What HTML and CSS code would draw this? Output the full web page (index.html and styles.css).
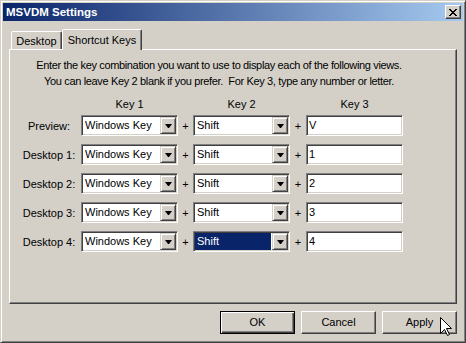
FILE: index.html
```html
<!DOCTYPE html>
<html lang="en">
<head>
    <meta charset="UTF-8">
    <title>MSVDM Settings</title>
    <link rel="stylesheet" href="styles.css">
</head>
<body>

<div class="window">
    <div class="titlebar">
        <span>MSVDM Settings</span>
        <button class="close" title="Close">
            <svg width="8" height="7" viewBox="0 0 8 7">
                <path d="M0 0h2v1h-2zM6 0h2v1h-2zM1 1h2v1h-2zM5 1h2v1h-2zM2 2h4v1h-4zM3 3h2v1h-2zM2 4h4v1h-4zM1 5h2v1h-2zM5 5h2v1h-2zM0 6h2v1h-2zM6 6h2v1h-2z" fill="#000"/>
            </svg>
        </button>
    </div>

    <div class="tabs">
        <div class="tab tab-desktop">Desktop</div>
        <div class="tab active">Shortcut Keys</div>
    </div>

    <div class="panel">
        <p class="intro">
            Enter the key combination you want to use to display each of the following views.<br>
            You can leave Key 2 blank if you prefer.&nbsp; For Key 3, type any number or letter.
        </p>

        <div class="keys">
            <div class="row head">
                <span></span><span class="col">Key 1</span><span></span><span class="col">Key 2</span><span></span><span class="col">Key 3</span>
            </div>

            <div class="row">
                <span class="label">Preview:</span>
                <div class="combo"><span class="value">Windows Key</span><span class="drop"></span></div>
                <span class="plus">+</span>
                <div class="combo"><span class="value">Shift</span><span class="drop"></span></div>
                <span class="plus">+</span>
                <div class="field">V</div>
            </div>

            <div class="row">
                <span class="label">Desktop 1:</span>
                <div class="combo"><span class="value">Windows Key</span><span class="drop"></span></div>
                <span class="plus">+</span>
                <div class="combo"><span class="value">Shift</span><span class="drop"></span></div>
                <span class="plus">+</span>
                <div class="field">1</div>
            </div>

            <div class="row">
                <span class="label">Desktop 2:</span>
                <div class="combo"><span class="value">Windows Key</span><span class="drop"></span></div>
                <span class="plus">+</span>
                <div class="combo"><span class="value">Shift</span><span class="drop"></span></div>
                <span class="plus">+</span>
                <div class="field">2</div>
            </div>

            <div class="row">
                <span class="label">Desktop 3:</span>
                <div class="combo"><span class="value">Windows Key</span><span class="drop"></span></div>
                <span class="plus">+</span>
                <div class="combo"><span class="value">Shift</span><span class="drop"></span></div>
                <span class="plus">+</span>
                <div class="field">3</div>
            </div>

            <div class="row">
                <span class="label">Desktop 4:</span>
                <div class="combo"><span class="value">Windows Key</span><span class="drop"></span></div>
                <span class="plus">+</span>
                <div class="combo"><span class="value selected">Shift</span><span class="drop"></span></div>
                <span class="plus">+</span>
                <div class="field">4</div>
            </div>
        </div>
    </div>

    <div class="actions">
        <button class="btn default">OK</button>
        <button class="btn">Cancel</button>
        <button class="btn">Apply</button>
    </div>

    <!-- mouse pointer over Apply -->
    <svg class="cursor" width="12" height="20" viewBox="0 0 12 20">
        <path d="M0.5 0.5V16.5L4.5 12.5L7.5 18.5L9.5 17.5L6.5 11.5H11.5Z" fill="#fff" stroke="#000" stroke-width="1"/>
    </svg>
</div>

</body>
</html>
```

FILE: styles.css
```css
body {
    margin: 0;
    font-family: "Liberation Sans", Arial, sans-serif;
    font-size: 11px;
    color: #000;
}
.window {
    position: relative;
    width: 466px;
    height: 343px;
    box-sizing: border-box;
    background: #d4d0c8;
    border: 1px solid;
    border-color: #d4d0c8 #404040 #404040 #d4d0c8;
    box-shadow: inset 1px 1px #fff, inset -1px -1px #808080;
    padding: 2px;
}
.titlebar {
    height: 18px;
    display: flex;
    align-items: center;
    justify-content: space-between;
    padding: 0 2px 0 3px;
    background: linear-gradient(to right, #0a246a, #a6caf0);
    color: #fff;
    font-weight: bold;
    font-size: 11.5px;
}
.close {
    width: 16px;
    height: 14px;
    box-sizing: border-box;
    padding: 0;
    display: flex;
    align-items: center;
    justify-content: center;
    background: #d4d0c8;
    border: 1px solid;
    border-color: #fff #404040 #404040 #fff;
    box-shadow: inset -1px -1px #808080;
}
.tabs {
    display: flex;
    align-items: flex-end;
    height: 20px;
    margin: 8px 0 0 8px;
}
.tab {
    height: 18px;
    box-sizing: border-box;
    display: flex;
    align-items: center;
    justify-content: center;
    background: #d4d0c8;
    border: 1px solid;
    border-bottom: none;
    border-color: #fff #404040 transparent #fff;
    box-shadow: inset -1px 0 #808080;
    border-radius: 2px 2px 0 0;
}
.tab-desktop {
    width: 51px;
    padding-top: 1px;
}
.tab.active {
    position: relative;
    z-index: 1;
    width: 80px;
    height: 21px;
    margin-bottom: -1px;
    padding-bottom: 1px;
}
.panel {
    height: 255px;
    box-sizing: border-box;
    margin: 0 6px;
    border: 1px solid;
    border-color: #fff #404040 #404040 #fff;
    box-shadow: inset -1px -1px #808080;
}
.intro {
    width: 418px;
    margin: 7px 0 0;
    text-align: center;
    line-height: 16px;
    letter-spacing: -0.35px;
}
.keys {
    margin-left: 10px;
}
.row {
    display: grid;
    grid-template-columns: 61px 97px 15px 97px 16px 97px;
    align-items: center;
    height: 21px;
    margin-top: 8px;
}
.row.head {
    height: 16px;
    margin-top: 7px;
}
.row.head + .row {
    margin-top: 3px;
}
.col,
.plus {
    text-align: center;
}
.label {
    text-align: center;
    padding-right: 3px;
}
.combo,
.field {
    height: 21px;
    box-sizing: border-box;
    display: flex;
    padding: 1px;
    background: #fff;
    border: 1px solid;
    border-color: #808080 #fff #fff #808080;
    box-shadow: inset 1px 1px #404040, inset -1px -1px #d4d0c8;
}
.field {
    padding-left: 2px;
    line-height: 17px;
}
.value {
    flex: 1;
    padding-left: 2px;
    line-height: 17px;
    white-space: nowrap;
}
.value.selected {
    background: #0a246a;
    color: #fff;
    margin-right: 1px;
}
.drop {
    width: 16px;
    height: 17px;
    box-sizing: border-box;
    display: flex;
    align-items: center;
    justify-content: center;
    background: #d4d0c8;
    border: 1px solid;
    border-color: #d4d0c8 #404040 #404040 #d4d0c8;
    box-shadow: inset 1px 1px #fff, inset -1px -1px #808080;
}
.drop::after {
    content: "";
    width: 1px;
    border-top: 4px solid #000;
    border-left: 3px solid transparent;
    border-right: 3px solid transparent;
}
.actions {
    display: flex;
    justify-content: flex-end;
    gap: 6px;
    margin: 7px 6px 0 0;
}
.btn {
    width: 75px;
    height: 23px;
    box-sizing: border-box;
    padding: 0 0 2px;
    font: inherit;
    color: #000;
    background: #d4d0c8;
    border: 1px solid;
    border-color: #fff #404040 #404040 #fff;
    box-shadow: inset -1px -1px #808080;
}
.btn.default {
    border-color: #000;
    box-shadow: inset 1px 1px #fff, inset -1px -1px #404040, inset -2px -2px #808080;
}
.cursor {
    position: absolute;
    left: 439px;
    top: 316px;
}
```
